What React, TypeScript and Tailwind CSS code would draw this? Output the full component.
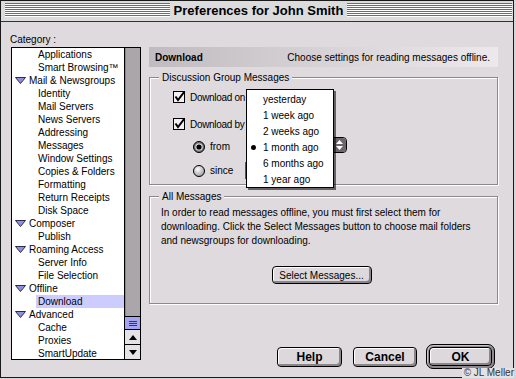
import React from "react";

const items: { label: string; parent?: boolean; selected?: boolean }[] = [
  { label: "Applications" },
  { label: "Smart Browsing™" },
  { label: "Mail & Newsgroups", parent: true },
  { label: "Identity" },
  { label: "Mail Servers" },
  { label: "News Servers" },
  { label: "Addressing" },
  { label: "Messages" },
  { label: "Window Settings" },
  { label: "Copies & Folders" },
  { label: "Formatting" },
  { label: "Return Receipts" },
  { label: "Disk Space" },
  { label: "Composer", parent: true },
  { label: "Publish" },
  { label: "Roaming Access", parent: true },
  { label: "Server Info" },
  { label: "File Selection" },
  { label: "Offline", parent: true },
  { label: "Download", selected: true },
  { label: "Advanced", parent: true },
  { label: "Cache" },
  { label: "Proxies" },
  { label: "SmartUpdate" },
];

const menuItems = ["yesterday", "1 week ago", "2 weeks ago", "1 month ago", "6 months ago", "1 year ago"];

function Disclosure() {
  return (
    <svg width="11" height="7" viewBox="0 0 11 7">
      <polygon points="0.5,0.5 10.5,0.5 5.5,6.5" fill="#9090e0" stroke="#2a2a4a" strokeWidth="1" />
    </svg>
  );
}

function Checkbox() {
  return (
    <svg width="13" height="13" viewBox="0 0 13 13" className="shrink-0 overflow-visible">
      <rect x="0.5" y="0.5" width="11" height="11" fill="#f2f0f2" stroke="#000" />
      <path d="M2.5 5.5 L5 9 L11.5 0.5" stroke="#000" strokeWidth="2" fill="none" />
    </svg>
  );
}

function Radio({ on }: { on?: boolean }) {
  return (
    <svg width="12" height="12" viewBox="0 0 12 12" className="shrink-0">
      <defs>
        <radialGradient id="rg" cx="0.4" cy="0.35" r="0.7">
          <stop offset="0" stopColor="#ffffff" />
          <stop offset="1" stopColor="#9a969a" />
        </radialGradient>
      </defs>
      {on ? (
        <>
          <circle cx="6" cy="6" r="5.5" fill="#777" stroke="#000" />
          <circle cx="6" cy="6" r="3.6" fill="#e8e8e8" />
          <circle cx="6" cy="6" r="2.6" fill="#000" />
        </>
      ) : (
        <circle cx="6" cy="6" r="5.5" fill="url(#rg)" stroke="#000" />
      )}
    </svg>
  );
}

function MacButton({ label, className = "" }: { label: string; className?: string }) {
  return (
    <div
      className={`flex items-center justify-center rounded-[4px] border border-black bg-[#dcd8dc] shadow-[inset_1px_1px_0_#fff,inset_-2px_-2px_0_#8a868a] ${className}`}
    >
      {label}
    </div>
  );
}

export default function App() {
  const ui = "font-['Liberation_Sans',sans-serif] text-[10px] text-black";
  return (
    <div className="h-[379px] w-[516px] bg-[#d6d4d6]">
      <div className={`relative flex h-[378px] w-[514px] flex-col border border-[#1a1a1a] bg-[#dedade] ${ui}`}>
        {/* title bar */}
        <div className="flex h-[21px] items-start border-b border-[#333] bg-[#dcdcdc] pl-[4px] pr-[1px] pt-[2px]">
          <div className="h-[14px] flex-1 bg-[repeating-linear-gradient(to_bottom,#6e6e6e_0px,#6e6e6e_1px,#ffffff_1px,#ffffff_2px)]" />
          <div className="-mt-[2px] px-[4px] text-[13px] font-bold leading-[19px]">Preferences for John Smith</div>
          <div className="h-[14px] flex-1 bg-[repeating-linear-gradient(to_bottom,#6e6e6e_0px,#6e6e6e_1px,#ffffff_1px,#ffffff_2px)]" />
        </div>

        {/* body */}
        <div className="flex flex-1 pl-[9px] pr-[14px] pt-[11px]">
          {/* category column */}
          <div className="flex w-[131px] flex-col">
            <div className="h-[14px] leading-[13px]">Category :</div>
            <div className="ml-px flex h-[313px] w-[130px] border border-black bg-white">
              <div className="flex flex-1 flex-col">
                {items.map((it) =>
                  it.parent ? (
                    <div key={it.label} className="flex h-[13px] items-center pl-[3px]">
                      <Disclosure />
                      <span className="ml-[3px] leading-[13px]">{it.label}</span>
                    </div>
                  ) : (
                    <div key={it.label} className="flex h-[13px] pl-[24px]">
                      <span className={`flex-1 pl-[2px] leading-[13px] ${it.selected ? "bg-[#ccccff]" : ""}`}>
                        {it.label}
                      </span>
                    </div>
                  )
                )}
              </div>
              {/* scrollbar */}
              <div className="flex w-[16px] flex-col border-l border-black">
                <div className="flex-1 bg-[#aaa6aa] shadow-[inset_1px_0_0_#888]" />
                <div className="flex h-[14px] flex-col items-center justify-center gap-[1px] border-y border-black bg-[#a4a4f0]">
                  <div className="h-px w-[8px] bg-[#33337a]" />
                  <div className="h-px w-[8px] bg-[#33337a]" />
                  <div className="h-px w-[8px] bg-[#33337a]" />
                </div>
                <div className="flex h-[15px] items-center justify-center border-b border-black bg-[#e4e2e4]">
                  <svg width="8" height="5" viewBox="0 0 8 5">
                    <polygon points="0,5 8,5 4,0" fill="#000" />
                  </svg>
                </div>
                <div className="flex h-[14px] items-center justify-center bg-[#e4e2e4]">
                  <svg width="8" height="5" viewBox="0 0 8 5">
                    <polygon points="0,0 8,0 4,5" fill="#000" />
                  </svg>
                </div>
              </div>
            </div>
          </div>

          {/* right panel */}
          <div className="ml-[8px] flex w-[349px] flex-col pt-[14px]">
            <div className="flex h-[20px] items-center bg-[linear-gradient(to_right,#bfbbbf,#d2ced2_40%,#ece8ec)] pl-[6px] pr-[8px]">
              <span className="font-bold">Download</span>
              <span className="ml-auto">Choose settings for reading messages offline.</span>
            </div>

            {/* Discussion Group Messages */}
            <div className="mt-[10px] flex h-[108px] flex-col border border-[#8c888c] shadow-[1px_1px_0_#fff,inset_1px_1px_0_#fff]">
              <div className="-mt-[7px] ml-[9px] h-[13px] w-fit bg-[#dedade] px-[3px] leading-[13px]">
                Discussion Group Messages
              </div>
              <div className="mt-[7px] flex h-[13px] items-center gap-[4px] pl-[23px]">
                <Checkbox />
                <span className="tracking-[-0.3px]">Download on</span>
              </div>
              <div className="mt-[14px] flex h-[13px] items-center gap-[4px] pl-[23px]">
                <Checkbox />
                <span className="tracking-[-0.3px]">Download by</span>
              </div>
              <div className="mt-[6px] flex h-[16px] items-end pl-[43px]">
                <Radio on />
                <span className="ml-[5px] w-[36px] leading-[13px]">from</span>
                <div className="flex h-[16px] w-[101px] self-start overflow-hidden rounded-[4px] border border-black bg-[#eeeeee]">
                  <div className="flex-1" />
                  <div className="flex w-[13px] flex-col items-center justify-center gap-[2px] bg-[#6a666a]">
                    <svg width="7" height="4" viewBox="0 0 7 4">
                      <polygon points="0,4 7,4 3.5,0" fill="#fff" />
                    </svg>
                    <svg width="7" height="4" viewBox="0 0 7 4">
                      <polygon points="0,0 7,0 3.5,4" fill="#fff" />
                    </svg>
                  </div>
                </div>
              </div>
              <div className="mt-[9px] flex h-[17px] items-center pl-[43px]">
                <Radio />
                <span className="ml-[5px] w-[35px]">since</span>
                <div className="h-[17px] w-[80px] border border-[#555] bg-[#dedade]" />
              </div>
            </div>

            {/* All Messages */}
            <div className="mt-[11px] flex h-[108px] flex-col border border-[#8c888c] shadow-[1px_1px_0_#fff,inset_1px_1px_0_#fff]">
              <div className="-mt-[7px] ml-[9px] h-[13px] w-fit bg-[#dedade] px-[3px] leading-[13px]">All Messages</div>
              <p className="mt-[3px] pl-[11px] leading-[14px]">
                In order to read messages offline, you must first select them for
                <br />
                downloading. Click the Select Messages button to choose mail folders
                <br />
                and newsgroups for downloading.
              </p>
              <div className="mt-[18px] flex justify-center pr-[4px]">
                <MacButton label="Select Messages..." className="h-[18px] w-[100px]" />
              </div>
            </div>

            {/* dialog buttons */}
            <div className="mt-auto flex items-center justify-end pb-[8px] pr-[3px] text-[12px] font-bold">
              <MacButton label="Help" className="h-[20px] w-[65px]" />
              <MacButton label="Cancel" className="ml-[11px] h-[20px] w-[64px]" />
              <div className="ml-[9px] flex h-[25px] w-[69px] rounded-[7px] border border-black bg-[#8e8a8e] p-[2px] shadow-[inset_1px_1px_0_#c8c4c8]">
                <MacButton label="OK" className="flex-1" />
              </div>
            </div>
          </div>
        </div>

        {/* opened popup menu */}
        <div className="absolute left-[245px] top-[88px] w-[88px] border border-black bg-white pt-px shadow-[2px_2px_0_rgba(0,0,0,0.55)]">
          {menuItems.map((m) => (
            <div key={m} className="relative flex h-[16px] items-center pl-[16px]">
              {m === "1 month ago" && (
                <span className="absolute left-[4px] top-[6px] h-[5px] w-[5px] rounded-full bg-black" />
              )}
              {m}
            </div>
          ))}
        </div>

        <div className="absolute -bottom-px -right-px bg-[#e4e2e4] pl-[2px] text-[10px] leading-[10px] text-[#333]">
          © JL Meller
        </div>
      </div>
    </div>
  );
}
